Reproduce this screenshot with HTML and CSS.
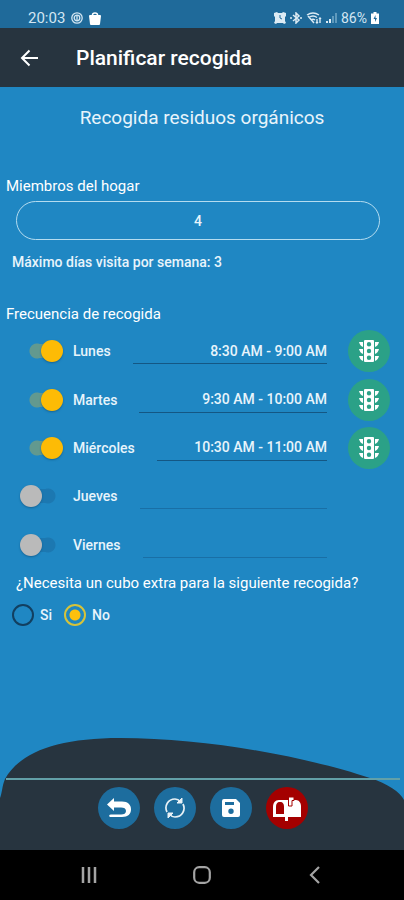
FILE: index.html
```html
<!DOCTYPE html>
<html lang="es">
<head>
<meta charset="utf-8">
<meta name="viewport" content="width=device-width, initial-scale=1">
<title>Planificar recogida</title>
<link rel="stylesheet" href="styles.css">
</head>
<body>
<svg class="symbols" aria-hidden="true">
  <symbol id="traffic" viewBox="0 0 20 22">
    <path fill="#fff" fill-rule="evenodd" d="M6 0h8q1 0 1 1v20q0 1-1 1H6q-1 0-1-1V1q0-1 1-1zM10 2a2.200 2.200 0 1 0 0 4.400a2.200 2.200 0 1 0 0-4.400zM10 8.800a2.200 2.200 0 1 0 0 4.400a2.200 2.200 0 1 0 0-4.400zM10 15.600a2.200 2.200 0 1 0 0 4.400a2.200 2.200 0 1 0 0-4.400z"/>
    <path fill="#fff" d="M0 2h4v5Q1 6 0 2zM0 9h4v5Q1 13 0 9zM0 16h4v5Q1 20 0 16zM20 2h-4v5q3-1 4-5zM20 9h-4v5q3-1 4-5zM20 16h-4v5q3-1 4-5z"/>
  </symbol>
</svg>

<div class="status">
  <span class="status-group">
    <span class="clock">20:03</span>
    <svg width="12" height="12" viewBox="0 0 12 12" fill="none" stroke="#d3e6f2" stroke-width="1.300"><circle cx="6" cy="6" r="5.200"/><circle cx="6" cy="6" r="2.800"/><path d="M6 3v6"/></svg>
    <svg width="12" height="13" viewBox="0 0 12 13"><path d="M0 4q0-1 1-1h10q1 0 1 1l-1 8q0 1-1 1H2q-1 0-1-1z" fill="#fff"/><path d="M3.500 4V3q0-2 2.500-2t2.500 2v1" fill="none" stroke="#fff" stroke-width="1.500"/></svg>
  </span>
  <span class="status-group status-right">
    <svg width="12" height="12" viewBox="0 0 12 12"><path d="M0 1l3-1 1 1h4l1-1 3 1v3l-1 1v4l1 2-2 1-1-1H3l-1 1-2-1 1-2V5L0 4z" fill="#dcebf4"/><path d="M6 3v3l2 1" fill="none" stroke="#1f6a9a"/></svg>
    <svg width="12" height="12" viewBox="0 0 12 12" fill="none" stroke="#dcebf4" stroke-width="1.500"><path d="M3 3l6 5-3 3V1l3 3-6 5"/><path d="M1 5v2M11 5v2"/></svg>
    <svg width="16" height="12" viewBox="0 0 16 12" fill="none" stroke="#dcebf4" stroke-width="1.400"><path d="M1 3q6-4 12 0M3 5.500q4-3 8 0M5 8q2-1.500 4 0M2 4l6 7"/><path d="M11 7v4M14 6v5M10 10l1 1 1-1M13 7l1-1 1 1"/></svg>
    <svg width="11" height="12" viewBox="0 0 11 12"><path d="M0 9h2v2H0zM3 7h2v4H3z" fill="#dcebf4"/><path d="M6 4h2v7H6zM9 1h2v10H9z" fill="#5f9abd"/></svg>
    <span class="battery">86%</span>
    <svg width="8" height="12" viewBox="0 0 8 12"><path d="M2.500 0h3v1.500H8V12H0V1.500h2.500z" fill="#fff"/><path d="M4.500 3L2.500 7H4v3l2-4H4.500z" fill="#1f6a9a"/></svg>
  </span>
</div>

<header class="appbar">
  <button class="icon-button" type="button" aria-label="Atrás">
    <svg width="18" height="18" viewBox="0 0 18 18" fill="none" stroke="#fff" stroke-width="2"><path d="M18 9H2M9.500 1.500L2 9l7.500 7.500"/></svg>
  </button>
  <h1>Planificar recogida</h1>
</header>

<main>
  <h2>Recogida residuos orgánicos</h2>

  <label class="field-label" for="members">Miembros del hogar</label>
  <input class="members" id="members" type="text" inputmode="numeric" value="4">
  <p class="hint">Máximo días visita por semana: 3</p>

  <h3 class="field-label">Frecuencia de recogida</h3>
  <div class="days">
    <div class="day">
      <label class="day-name"><input class="switch" type="checkbox" checked>Lunes</label>
      <input class="slot" type="text" size="1" value="8:30 AM - 9:00 AM" aria-label="Horario del lunes">
      <button class="round traffic" type="button" aria-label="Tráfico del lunes"><svg width="20" height="22"><use href="#traffic"/></svg></button>
    </div>
    <div class="day">
      <label class="day-name"><input class="switch" type="checkbox" checked>Martes</label>
      <input class="slot" type="text" size="1" value="9:30 AM - 10:00 AM" aria-label="Horario del martes">
      <button class="round traffic" type="button" aria-label="Tráfico del martes"><svg width="20" height="22"><use href="#traffic"/></svg></button>
    </div>
    <div class="day">
      <label class="day-name"><input class="switch" type="checkbox" checked>Miércoles</label>
      <input class="slot" type="text" size="1" value="10:30 AM - 11:00 AM" aria-label="Horario del miércoles">
      <button class="round traffic" type="button" aria-label="Tráfico del miércoles"><svg width="20" height="22"><use href="#traffic"/></svg></button>
    </div>
    <div class="day idle">
      <label class="day-name"><input class="switch" type="checkbox">Jueves</label>
      <input class="slot" type="text" size="1" aria-label="Horario del jueves" disabled>
    </div>
    <div class="day idle">
      <label class="day-name"><input class="switch" type="checkbox">Viernes</label>
      <input class="slot" type="text" size="1" aria-label="Horario del viernes" disabled>
    </div>
  </div>

  <fieldset class="extra">
    <legend>¿Necesita un cubo extra para la siguiente recogida?</legend>
    <div class="options">
      <label><input type="radio" name="extra">Si</label>
      <label><input type="radio" name="extra" checked>No</label>
    </div>
  </fieldset>
</main>

<footer class="actions">
  <svg class="hill" viewBox="0 0 404 112" preserveAspectRatio="none" aria-hidden="true"><path d="M0 112V60C2 56 2 48 5 41C20 14 58 0 120 0C210 0 310 20 370 40C388 46 400 54 404 62V112z" fill="#27343f"/></svg>
  <div class="toolbar">
    <button class="round" type="button" aria-label="Volver">
      <svg width="26" height="20" viewBox="0 0 26 20"><path d="M1 6.500L8 0v3.500h8c6 0 9 3.500 9 8S22 19 16 19H4c-1.500-1-1-2.500 1-2.500h10c3 0 5-1 5-3.500s-2-3.500-5-3.500H8V13z" fill="#fff"/></svg>
    </button>
    <button class="round" type="button" aria-label="Actualizar">
      <svg width="22" height="22" viewBox="0 0 22 22" fill="none" stroke="#e8f1f6" stroke-width="1.700"><path d="M3 15C0 9 4 2 11 2q3 0 6 3M19 7c3 6-1 13-8 13q-3 0-6-3"/><path d="M18 1v5h-5zM4 21v-5h5z" fill="#e8f1f6" stroke-width="1"/></svg>
    </button>
    <button class="round" type="button" aria-label="Guardar">
      <svg width="18" height="18" viewBox="0 0 18 18"><path d="M2 0h12l4 4v12q0 2-2 2H2q-2 0-2-2V2q0-2 2-2zM3 3v3h9V3zM9 9.500a2.700 2.700 0 1 0 0 5.400a2.700 2.700 0 1 0 0-5.400z" fill="#fff" fill-rule="evenodd"/></svg>
    </button>
    <button class="round mail" type="button" aria-label="Buzón">
      <svg width="28" height="25" viewBox="0 0 28 25"><path d="M6 4h17c3 0 5 3 5 6v11H15v4h-3v-4H0V11c0-4 2-7 6-7z" fill="#fff"/><path d="M3 18v-7c0-3 1-5 4-5s4 2 4 5v7z" fill="#a40000"/><path d="M15.500 10V1H21v3.500h-2V10z" fill="#fff" stroke="#a40000"/></svg>
    </button>
  </div>
</footer>

<nav class="system" aria-label="Sistema">
  <button type="button" aria-label="Recientes"><svg width="18" height="18" viewBox="0 0 18 18" stroke="#a4a4a4" stroke-width="2.500"><path d="M3 1v16M9 1v16M15 1v16"/></svg></button>
  <button type="button" aria-label="Inicio"><svg width="18" height="18" viewBox="0 0 18 18" fill="none" stroke="#a4a4a4" stroke-width="2.200"><rect x="1.200" y="1.200" width="15.600" height="15.600" rx="5"/></svg></button>
  <button type="button" aria-label="Atrás"><svg width="18" height="18" viewBox="0 0 18 18" fill="none" stroke="#a4a4a4" stroke-width="2.200"><path d="M13 1L5 9l8 8"/></svg></button>
</nav>
</body>
</html>
```
FILE: styles.css
```css
* {
  box-sizing: border-box;
}

body {
  margin: 0;
  min-height: 100vh;
  display: flex;
  flex-direction: column;
  background: #1f87c3;
  color: #e8f4fb;
  font: 500 14px/20px Roboto, sans-serif;
}

button,
input {
  font: inherit;
  color: inherit;
  margin: 0;
  padding: 0;
  border: 0;
  background: none;
}

svg {
  display: block;
  flex: none;
}

.symbols {
  position: absolute;
  width: 0;
  height: 0;
}

.status {
  display: flex;
  justify-content: space-between;
  height: 28px;
  padding: 8px 25px 0 28px;
  background: #1f6a9a;
  color: #d3e6f2;
  font-weight: 400;
}

.status-group {
  display: flex;
  align-items: center;
  gap: 6px;
  height: 20px;
}

.status-right {
  gap: 4px;
}

.clock {
  font-size: 15px;
}

.appbar {
  display: flex;
  align-items: center;
  gap: 38px;
  height: 59px;
  padding-left: 20px;
  background: #27343f;
}

h1,
h2,
h3,
p {
  margin: 0;
}

h1 {
  font-size: 21px;
  font-weight: 500;
  line-height: 24px;
  color: #fff;
}

main {
  flex: 1;
  display: flex;
  flex-direction: column;
}

h2 {
  margin: 19px 0 46px;
  font-size: 19px;
  font-weight: 400;
  line-height: 24px;
  text-align: center;
}

.field-label,
.extra legend {
  font-size: 15px;
  font-weight: 400;
  color: #fff;
}

.field-label {
  padding-left: 6px;
}

.members {
  height: 39px;
  margin: 5px 24px 0 16px;
  border: 1px solid #b4dcf0;
  border-radius: 20px;
  text-align: center;
}

.hint {
  margin: 12px 0 32px;
  padding-left: 12px;
}

.days {
  display: grid;
  grid-template-rows: repeat(5, 1fr);
  min-height: 242px;
  margin-top: 3px;
  padding: 0 14px 0 20px;
}

.day {
  display: flex;
  align-items: center;
}

.day-name {
  display: flex;
  align-items: center;
  gap: 10px;
}

.switch {
  appearance: none;
  display: flex;
  align-items: center;
  width: 43px;
  height: 22px;
  background: radial-gradient(circle at 28px 11px, #1c78b1 7px, #0000 8px), linear-gradient(#1c78b1, #1c78b1) 9px 4px / 19px 14px no-repeat;
}

.switch::before {
  content: "";
  width: 22px;
  height: 22px;
  border-radius: 50%;
  background: #bababa;
  box-shadow: 0 1px 2px #0b4d7a99;
}

.switch:checked {
  width: 34px;
  margin-left: 9px;
  justify-content: flex-end;
  background: radial-gradient(circle at 8px 11px, #62998f 7px, #0000 8px), linear-gradient(#62998f, #62998f) 8px 4px / 16px 14px no-repeat;
}

.switch:checked::before {
  background: #fdbb05;
}

.slot {
  flex: 1;
  min-width: 0;
  height: 26px;
  margin: 0 21px 0 22px;
  border-bottom: 1px solid #145784;
  text-align: right;
}

.idle .slot {
  margin-right: 63px;
  border-color: #196fa6;
}

.round {
  display: flex;
  align-items: center;
  justify-content: center;
  flex: none;
  width: 42px;
  height: 42px;
  border-radius: 50%;
  background: #1d6d9e;
}

.round.traffic {
  background: #2ba187;
}

.round.mail {
  background: #a40000;
}

.extra {
  margin: 4px 0 0;
  padding: 0 12px;
  border: 0;
}

.extra legend {
  padding: 0 4px;
}

.options {
  display: flex;
  gap: 12px;
  padding-top: 11px;
}

.options label {
  display: flex;
  align-items: center;
  gap: 6px;
}

.options input {
  appearance: none;
  width: 22px;
  height: 22px;
  border: 2px solid #123f60;
  border-radius: 50%;
}

.options input:checked {
  border-color: #d6c33a;
  background: radial-gradient(circle, #fdc00d 5px, #0000 6px);
}

.actions {
  position: relative;
  height: 112px;
  padding: 40px 4px 0 6px;
}

.hill {
  position: absolute;
  inset: 0;
  width: 100%;
  height: 100%;
}

.toolbar {
  position: relative;
  display: flex;
  justify-content: center;
  gap: 14px;
  padding-top: 7px;
  border-top: 2px solid #62a0a8;
}

.system {
  display: flex;
  justify-content: space-evenly;
  align-items: center;
  height: 50px;
  background: #000;
}

.system button {
  display: flex;
  justify-content: center;
  width: 48px;
}
```
